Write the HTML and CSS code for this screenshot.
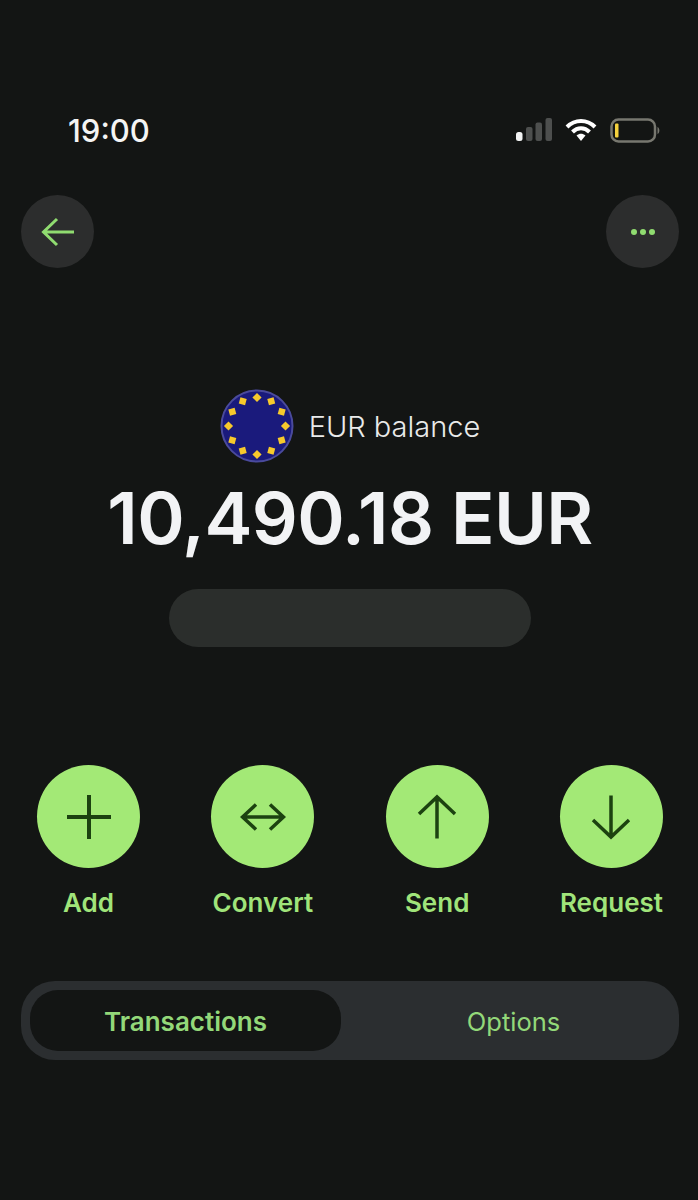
FILE: index.html
```html
<!DOCTYPE html>
<html lang="en">
<head>
    <meta charset="UTF-8">
    <meta name="viewport" content="width=device-width, initial-scale=1.0">
    <title>EUR balance</title>
    <link rel="stylesheet" href="styles.css">
</head>
<body>
    <div class="status-bar">
        <span class="time">19:00</span>
        <div class="status-icons">
            <svg width="36" height="24" viewBox="0 0 36 24">
                <rect x="0" y="14" width="6.500" height="9" rx="2.500" fill="#f2f3f3"/>
                <rect x="10" y="9" width="6.500" height="14" rx="2" fill="#4d4f4e"/>
                <rect x="19.500" y="4.500" width="6.500" height="18.500" rx="2" fill="#4d4f4e"/>
                <rect x="29.500" y="0" width="6.500" height="23" rx="2" fill="#4d4f4e"/>
            </svg>
            <svg width="32" height="24" viewBox="0 0 32 24">
                <path d="M2 9 C10 1 22 1 30 9" fill="none" stroke="#fff" stroke-width="4"/>
                <path d="M7.5 14 C12.5 9 19.500 9 24.500 14" fill="none" stroke="#fff" stroke-width="4"/>
                <path d="M11.500 17.500 C14.500 15 17.500 15 20.500 17.500 L16 23 Z" fill="#fff"/>
            </svg>
            <svg class="battery" width="50" height="26" viewBox="0 0 50 26">
                <rect x="1.500" y="1.500" width="43.500" height="22" rx="7" fill="none" stroke="#77776f" stroke-width="2.500"/>
                <rect x="5" y="5.500" width="3.500" height="14" rx="1" fill="#f4d13d"/>
                <path d="M47.500 9 C50 10 50 15 47.500 16 Z" fill="#77776f"/>
            </svg>
        </div>
    </div>

    <div class="top-nav">
        <button class="round-btn">
            <svg width="34" height="30" viewBox="0 0 34 30">
                <path d="M33 15 H2.500 M16 2 L2.500 15 L16 28" fill="none" stroke="#90dc70" stroke-width="3"/>
            </svg>
        </button>
        <button class="round-btn">
            <svg width="26" height="8" viewBox="0 0 26 8">
                <circle cx="4" cy="4" r="3" fill="#90dc70"/>
                <circle cx="13" cy="4" r="3" fill="#90dc70"/>
                <circle cx="22" cy="4" r="3" fill="#90dc70"/>
            </svg>
        </button>
    </div>

    <div class="balance">
        <div class="balance-label">
            <svg width="74" height="74" viewBox="0 0 74 74">
                <circle cx="37" cy="37" r="35.500" fill="#1a1a7c" stroke="#4a4a9c" stroke-width="2"/>
                <g fill="#f7c92c">
                    <rect x="33.750" y="5.250" width="6.500" height="6.500" transform="rotate(45 37 8.500)"/>
                    <rect x="33.750" y="5.250" width="6.500" height="6.500" transform="rotate(30 37 37) rotate(45 37 8.500)"/>
                    <rect x="33.750" y="5.250" width="6.500" height="6.500" transform="rotate(60 37 37) rotate(45 37 8.500)"/>
                    <rect x="33.750" y="5.250" width="6.500" height="6.500" transform="rotate(90 37 37) rotate(45 37 8.500)"/>
                    <rect x="33.750" y="5.250" width="6.500" height="6.500" transform="rotate(120 37 37) rotate(45 37 8.500)"/>
                    <rect x="33.750" y="5.250" width="6.500" height="6.500" transform="rotate(150 37 37) rotate(45 37 8.500)"/>
                    <rect x="33.750" y="5.250" width="6.500" height="6.500" transform="rotate(180 37 37) rotate(45 37 8.500)"/>
                    <rect x="33.750" y="5.250" width="6.500" height="6.500" transform="rotate(210 37 37) rotate(45 37 8.500)"/>
                    <rect x="33.750" y="5.250" width="6.500" height="6.500" transform="rotate(240 37 37) rotate(45 37 8.500)"/>
                    <rect x="33.750" y="5.250" width="6.500" height="6.500" transform="rotate(270 37 37) rotate(45 37 8.500)"/>
                    <rect x="33.750" y="5.250" width="6.500" height="6.500" transform="rotate(300 37 37) rotate(45 37 8.500)"/>
                    <rect x="33.750" y="5.250" width="6.500" height="6.500" transform="rotate(330 37 37) rotate(45 37 8.500)"/>
                </g>
            </svg>
            <span>EUR balance</span>
        </div>
        <div class="amount">10,490.18 EUR</div>
        <div class="masked"></div>
    </div>

    <div class="actions">
        <div class="action">
            <div class="action-circle">
                <svg width="46" height="46" viewBox="0 0 46 46">
                    <path d="M23 1 V45 M1 23 H45" fill="none" stroke="#1c4210" stroke-width="4"/>
                </svg>
            </div>
            <span>Add</span>
        </div>
        <div class="action">
            <div class="action-circle">
                <svg width="46" height="28" viewBox="0 0 46 28">
                    <path d="M3 14 H43 M16 1.500 L2.500 14 L16 26.500 M30 1.500 L43.500 14 L30 26.500" fill="none" stroke="#1c4210" stroke-width="3.500"/>
                </svg>
            </div>
            <span>Convert</span>
        </div>
        <div class="action">
            <div class="action-circle">
                <svg width="40" height="46" viewBox="0 0 40 46">
                    <path d="M20 44.500 V3 M2 20 L20 3 L38 20" fill="none" stroke="#1c4210" stroke-width="3.500"/>
                </svg>
            </div>
            <span>Send</span>
        </div>
        <div class="action">
            <div class="action-circle">
                <svg width="40" height="46" viewBox="0 0 40 46">
                    <path d="M20 1.500 V43 M2 26 L20 43 L38 26" fill="none" stroke="#1c4210" stroke-width="3.500"/>
                </svg>
            </div>
            <span>Request</span>
        </div>
    </div>

    <div class="tabs">
        <div class="tab active">Transactions</div>
        <div class="tab">Options</div>
    </div>
</body>
</html>
```

FILE: styles.css
```css
* { box-sizing: border-box; }
body { margin: 0; width: 698px; height: 1200px; overflow: hidden; background: #131514; font-family: Inter, "Liberation Sans", sans-serif; color: #f2f3f5; }

.status-bar { display: flex; justify-content: space-between; align-items: center; height: 40px; margin-top: 110px; padding: 0 38px 0 68px; }
.time { font-size: 31px; font-weight: 500; color: #f4f4f4; }
.status-icons { display: flex; align-items: center; gap: 13px; }
.battery { margin-top: 2px; }

.top-nav { display: flex; justify-content: space-between; padding: 0 19px 0 21px; margin-top: 45px; }
.round-btn { display: flex; align-items: center; justify-content: center; width: 73px; height: 73px; padding: 0; border: none; border-radius: 50%; background: #2c2d2d; }

.balance { display: flex; flex-direction: column; align-items: center; margin-top: 121px; padding-left: 2px; }
.balance-label { display: flex; align-items: center; gap: 15px; font-size: 29px; font-weight: 300; color: #e9eaea; }
.amount { margin-top: 11px; font-size: 72px; line-height: 88px; font-weight: 600; letter-spacing: -0.6px; }
.masked { width: 362px; height: 58px; margin-top: 27px; border-radius: 29px; background: #2b2e2c; }

.actions { display: flex; justify-content: space-between; margin-top: 118px; padding: 0 18px 0 20px; }
.action { display: flex; flex-direction: column; align-items: center; width: 137px; font-size: 26px; font-weight: 600; color: #a0e47a; }
.action-circle { display: flex; align-items: center; justify-content: center; width: 103px; height: 103px; margin-bottom: 19px; border-radius: 50%; background: #a3e976; }

.tabs { display: flex; align-items: center; height: 79px; margin: 63px 19px 0 21px; padding: 0 9px; border-radius: 34px; background: #2b2e30; }
.tab { flex: 1; text-align: center; padding: 2px 0 0 16px; font-size: 25.500px; font-weight: 400; color: #93d879; }
.tab.active { flex: none; width: 311px; height: 61px; padding: 0; border-radius: 28px; background: #131514; font-size: 26px; font-weight: 600; line-height: 63px; }
```
